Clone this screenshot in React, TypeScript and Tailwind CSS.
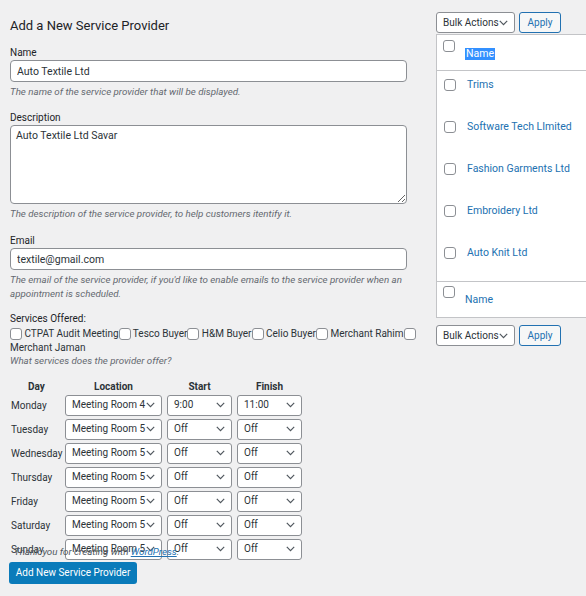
import React from "react";

const F = "font-['Roboto',sans-serif]";

function Chevron() {
  return (
    <svg width="9" height="6" viewBox="0 0 9 6" className="shrink-0">
      <path d="M0.8 0.9 L4.5 4.6 L8.2 0.9" fill="none" stroke="#50575e" strokeWidth="1.2" />
    </svg>
  );
}

function Box({ cls = "" }: { cls?: string }) {
  return (
    <span
      className={`inline-block w-[12px] h-[12px] border border-[#8c8f94] rounded-[3px] bg-white align-[-3px] ${cls}`}
    />
  );
}

function Sel({ text, w }: { text: string; w: string }) {
  return (
    <div
      className={`${w} h-[21px] bg-white border border-[#8c8f94] rounded-[3px] flex items-center justify-between pl-[6px] pr-[6px] text-[10px] text-[#2c3338] leading-none`}
    >
      <span className="whitespace-nowrap">{text}</span>
      <Chevron />
    </div>
  );
}

const days: [string, string, string, string][] = [
  ["Monday", "Meeting Room 4", "9:00", "11:00"],
  ["Tuesday", "Meeting Room 5", "Off", "Off"],
  ["Wednesday", "Meeting Room 5", "Off", "Off"],
  ["Thursday", "Meeting Room 5", "Off", "Off"],
  ["Friday", "Meeting Room 5", "Off", "Off"],
  ["Saturday", "Meeting Room 5", "Off", "Off"],
  ["Sunday", "Meeting Room 5", "Off", "Off"],
];

const providers = ["Trims", "Software Tech LImited", "Fashion Garments Ltd", "Embroidery Ltd", "Auto Knit Ltd"];

function BulkBar() {
  return (
    <div className="flex gap-[4px]">
      <div className="w-[79px] h-[21px] bg-white border border-[#8c8f94] rounded-[3px] flex items-center justify-between pl-[6px] pr-[6px] text-[10px] text-[#2c3338] leading-none">
        <span className="whitespace-nowrap">Bulk Actions</span>
        <Chevron />
      </div>
      <div className="w-[42px] h-[21px] bg-[#f6f7f7] border border-[#2271b1] rounded-[3px] flex items-center justify-center text-[10px] text-[#2271b1] leading-none">
        Apply
      </div>
    </div>
  );
}

export default function App() {
  const help = "text-[9.75px] leading-[14px] italic text-[#646970]";
  const label = "text-[10px] leading-[14px] text-[#1d2327]";
  return (
    <div className={`${F} w-[586px] h-[596px] bg-[#f0f0f1] flex overflow-hidden text-[#1d2327]`}>
      {/* Left column */}
      <div className="w-[436px] shrink-0 pl-[10px] pt-[16px] relative">
        <h2 className="text-[13px] leading-[20px] text-[#1d2327]">Add a New Service Provider</h2>

        <div className={`${label} mt-[10px]`}>Name</div>
        <input
          readOnly
          value="Auto Textile Ltd"
          className="block w-[397px] h-[22px] bg-white border border-[#8c8f94] rounded-[4px] px-[6px] text-[10.5px] text-[#2c3338] outline-none"
        />
        <p className={`${help} mt-[3px]`}>The name of the service provider that will be displayed.</p>

        <div className={`${label} mt-[12px]`}>Description</div>
        <textarea
          readOnly
          value="Auto Textile Ltd Savar"
          className="block w-[397px] h-[79px] bg-white border border-[#8c8f94] rounded-[4px] px-[5px] pt-[3px] text-[10.5px] leading-[14px] text-[#2c3338] outline-none resize-y"
        />
        <p className={`${help} mt-[3px]`}>The description of the service provider, to help customers itentify it.</p>

        <div className={`${label} mt-[13px]`}>Email</div>
        <input
          readOnly
          value="textile@gmail.com"
          className="block w-[397px] h-[22px] bg-white border border-[#8c8f94] rounded-[4px] px-[6px] text-[10.5px] text-[#2c3338] outline-none"
        />
        <p className={`${help} mt-[3px] w-[412px]`}>
          The email of the service provider, if you'd like to enable emails to the service provider when an
          appointment is scheduled.
        </p>

        <div className={`${label} mt-[11px]`}>Services Offered:</div>
        <div className="mt-[1px] text-[10px] leading-[13.5px] text-[#2c3338] w-[412px]">
          <Box /> CTPAT Audit Meeting<Box /> Tesco Buyer<Box /> H&amp;M Buyer<Box /> Celio Buyer<Box /> Merchant
          Rahim<Box /> Merchant Jaman
        </div>
        <p className="text-[9.75px] leading-[13.5px] italic text-[#646970]">What services does the provider offer?</p>

        {/* Schedule table */}
        <div className="mt-[12px] grid grid-cols-[49px_97px_65px_65px] gap-x-[5px] gap-y-[3px] pl-[1px] text-[10px] text-[#2c3338]">
          <div className="font-bold text-center leading-[14px] -mb-[2px] -mr-[2px]">Day</div>
          <div className="font-bold text-center leading-[14px] -mb-[2px]">Location</div>
          <div className="font-bold text-center leading-[14px] -mb-[2px]">Start</div>
          <div className="font-bold text-center leading-[14px] -mb-[2px]">Finish</div>
          {days.map(([d, loc, s, f]) => (
            <React.Fragment key={d}>
              <div className="flex items-center h-[21px] whitespace-nowrap">{d}</div>
              <Sel text={loc} w="w-[97px]" />
              <Sel text={s} w="w-[65px]" />
              <Sel text={f} w="w-[65px]" />
            </React.Fragment>
          ))}
        </div>

        <div className="mt-[2px] w-[128px] h-[22px] -ml-[1px] bg-[#0a7bba] rounded-[3px] flex items-center justify-center text-[10px] text-white">
          Add New Service Provider
        </div>

        <div className="absolute left-[14px] top-[545px] text-[9.75px] leading-[14px] italic text-[#50575e] whitespace-nowrap">
          Thank you for creating with <span className="text-[#2271b1] underline">WordPress</span>.
        </div>
      </div>

      {/* Right column */}
      <div className="flex-1 min-w-0 pt-[12px]">
        <BulkBar />
        <div className="mt-[1px] w-[170px] bg-white border border-[#c3c4c7]">
          <div className="h-[36px] border-b border-[#c3c4c7] flex items-start">
            <Box cls="ml-[6px] mt-[5px]" />
            <span className="ml-[10px] mt-[13px] text-[10.5px] leading-[12px] bg-[#3390ff] text-white px-[1px]">
              Name
            </span>
          </div>
          {providers.map((p) => (
            <div key={p} className="h-[42px] flex items-start pt-[7px]">
              <Box cls="ml-[7px] mt-[1px]" />
              <span className="ml-[11px] text-[10.5px] leading-[14px] text-[#2271b1] whitespace-nowrap">{p}</span>
            </div>
          ))}
          <div className="h-[36px] border-t border-[#c3c4c7] flex items-start">
            <Box cls="ml-[6px] mt-[4px]" />
            <span className="ml-[10px] mt-[11px] text-[10.5px] leading-[14px] text-[#2271b1]">Name</span>
          </div>
        </div>
        <div className="mt-[7px]">
          <BulkBar />
        </div>
      </div>
    </div>
  );
}
